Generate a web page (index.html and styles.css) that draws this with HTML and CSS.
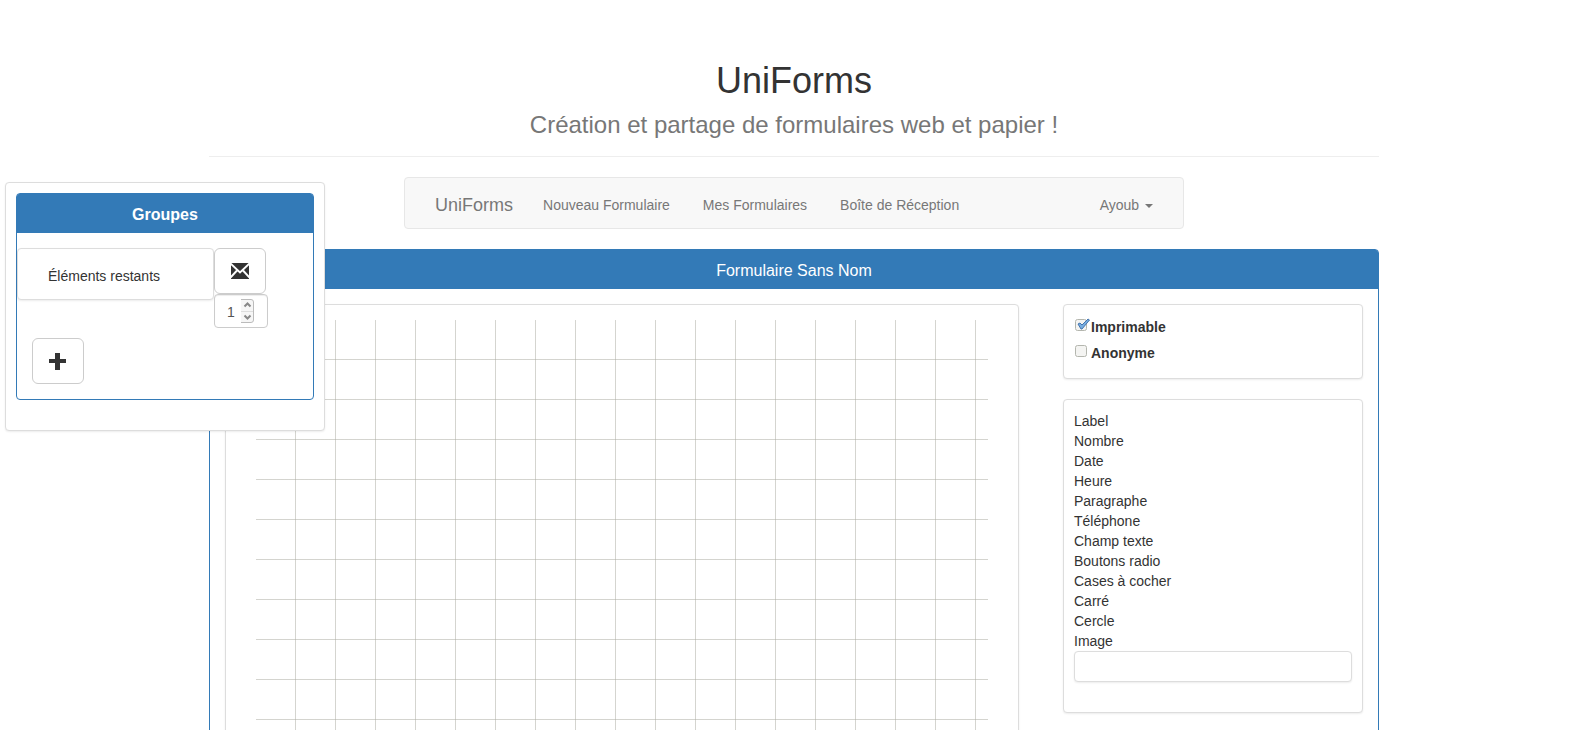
FILE: index.html
```html
<!DOCTYPE html>
<html lang="fr">
<head>
<meta charset="utf-8">
<title>UniForms</title>
<link rel="stylesheet" href="styles.css">
</head>
<body>
<div class="container">
  <header class="page-header">
    <h1>UniForms</h1>
    <p class="tagline">Création et partage de formulaires web et papier !</p>
  </header>

  <nav class="navbar">
    <a class="brand" href="#">UniForms</a>
    <div class="nav-links">
      <a class="nav-link" href="#">Nouveau Formulaire</a>
      <a class="nav-link" href="#">Mes Formulaires</a>
      <a class="nav-link" href="#">Boîte de Réception</a>
    </div>
    <button class="nav-link user-menu" type="button">Ayoub <span class="caret"></span></button>
  </nav>

  <main class="panel">
    <h2 class="panel-heading">Formulaire Sans Nom</h2>
    <div class="editor">
      <section class="thumbnail sheet"><div class="grid"></div></section>
      <aside class="sidebar">
        <div class="thumbnail options">
          <label class="check"><input type="checkbox" checked>Imprimable</label>
          <label class="check"><input type="checkbox">Anonyme</label>
        </div>
        <div class="thumbnail toolbox">
          <ul class="tools">
            <li>Label</li>
            <li>Nombre</li>
            <li>Date</li>
            <li>Heure</li>
            <li>Paragraphe</li>
            <li>Téléphone</li>
            <li>Champ texte</li>
            <li>Boutons radio</li>
            <li>Cases à cocher</li>
            <li>Carré</li>
            <li>Cercle</li>
            <li>Image</li>
          </ul>
          <input class="thumbnail image-field" type="text" aria-label="Image">
        </div>
      </aside>
    </div>
  </main>
</div>

<aside class="thumbnail groups">
  <div class="panel">
    <h2 class="panel-heading strong">Groupes</h2>
    <div class="group-row">
      <div class="thumbnail group-name">Éléments restants</div>
      <div class="group-actions">
        <button class="btn" type="button" aria-label="Envoyer">
          <svg width="18" height="18" viewBox="0 0 18 18" fill="none"><path d="M0 1h18v16H0z" fill="#333"/><path d="M-.5 1.500L9 10.500l9.500-9M-.5 15.500L6 8.500M18.500 15.500L12 8.500" stroke="#fff" stroke-width="1.900"/></svg>
        </button>
        <span class="number">
          <input type="number" value="1" aria-label="Nombre de groupes">
          <svg width="13" height="24" viewBox="0 0 13 24" fill="none"><path d="M0 .5h10a2.500 2.500 0 0 1 2.500 2.500v18a2.500 2.500 0 0 1-2.500 2.500H0" fill="#f6f6f6" stroke="#bbb"/><path d="M0 12.500h12" stroke="#ddd"/><path d="M3.500 7.500l3-3 3 3M3.500 16.500l3 3 3-3" stroke="#888" stroke-width="2"/></svg>
        </span>
      </div>
    </div>
    <button class="btn add" type="button" aria-label="Ajouter un groupe">
      <svg width="18" height="18" viewBox="0 0 18 18" fill="currentColor"><path d="M6 1h5v6h6v4h-6v7H6v-7H0V7h6z"/></svg>
    </button>
  </div>
</aside>
</body>
</html>
```
FILE: styles.css
```css
* { box-sizing: border-box; }

body {
  margin: 0;
  padding-left: 7px;
  background: #fff;
  color: #333;
  font: 14px/20px "Liberation Sans", Arial, sans-serif;
}

h1, h2, p, ul { margin: 0; padding: 0; font-weight: 400; }

button, input { font: inherit; color: inherit; }

.container { max-width: 1170px; margin: 0 auto; }

.page-header {
  padding: 61px 0 18px;
  margin-bottom: 20px;
  border-bottom: 1px solid #eee;
  text-align: center;
}

.page-header h1 { font-size: 36px; line-height: 40px; }

.tagline {
  margin-top: 11px;
  color: #777;
  font-size: 24px;
  line-height: 26px;
}

.navbar {
  display: flex;
  align-items: center;
  width: 66.667%;
  min-height: 52px;
  margin: 0 auto 20px;
  padding: 0 15px;
  background: #f8f8f8;
  border: 1px solid #e7e7e7;
  border-radius: 4px;
}

.nav-links { display: flex; gap: 3px; }

.brand, .nav-link {
  padding: 17px 15px 13px;
  border: 0;
  background: none;
  color: #777;
  text-decoration: none;
}

.brand { font-size: 18px; }

.user-menu { margin-left: auto; }

.caret {
  display: inline-block;
  margin-left: 2px;
  vertical-align: middle;
  border-top: 4px solid;
  border-left: 4px solid transparent;
  border-right: 4px solid transparent;
}

.panel {
  border: 1px solid #337ab7;
  border-radius: 4px;
  background: #fff;
}

.panel-heading {
  padding: 11px 15px 9px;
  background: #337ab7;
  border-radius: 2px 2px 0 0;
  color: #fff;
  font-size: 16px;
  line-height: 19px;
  text-align: center;
}

.strong { font-weight: 700; }

.thumbnail {
  background: #fff;
  border: 1px solid #ddd;
  border-radius: 4px;
  box-shadow: 0 1px 2px rgba(0, 0, 0, 0.075);
}

.editor {
  display: grid;
  grid-template-columns: 1fr 300px;
  gap: 44px;
  align-items: start;
  padding: 15px;
}

.sheet { padding: 15px 30px; }

.grid {
  height: 1000px;
  background:
    repeating-linear-gradient(to right, transparent 0 39px, rgba(170, 170, 160, 0.5) 39px 40px),
    repeating-linear-gradient(to bottom, transparent 0 39px, rgba(170, 170, 160, 0.5) 39px 40px);
}

.sidebar { display: grid; gap: 20px; }

.options {
  display: grid;
  gap: 6px;
  padding: 12px 10px 15px;
}

.check { display: flex; font-weight: 700; }

.check input {
  appearance: none;
  width: 17px;
  height: 14px;
  margin: 1px 0 0;
  background: url("data:image/svg+xml,%3Csvg xmlns='http://www.w3.org/2000/svg' width='17' height='14'%3E%3Crect x='1.500' y='1.500' width='11' height='11' rx='2' fill='%23f4f4f2' stroke='%23b4b6ae'/%3E%3C/svg%3E") no-repeat;
}

.check input:checked {
  background-image: url("data:image/svg+xml,%3Csvg xmlns='http://www.w3.org/2000/svg' width='17' height='14'%3E%3Crect x='1.500' y='1.500' width='11' height='11' rx='2' fill='%23f4f4f2' stroke='%23b4b6ae'/%3E%3Cpath d='M4 6l2-1 2 2 6-6 1.500 1L8 11H7z' fill='%2378aee0' stroke='%234474ae'/%3E%3C/svg%3E");
}

.toolbox { padding: 11px 10px 30px; }

.tools { list-style: none; }

.image-field { display: block; width: 100%; height: 31px; padding: 4px 8px; }

.groups {
  position: absolute;
  top: 182px;
  left: 5px;
  width: 320px;
  padding: 10px 10px 30px;
}

.group-row { display: flex; align-items: flex-start; padding-top: 15px; }

.group-name { width: 197px; padding: 17px 30px 13px; }

.group-actions { display: grid; justify-items: start; }

.btn {
  display: flex;
  align-items: center;
  justify-content: center;
  width: 52px;
  height: 46px;
  padding: 0;
  background: #fff;
  border: 1px solid #ccc;
  border-radius: 6px;
}

.add { margin: 10px 15px 15px; }

.number {
  display: flex;
  align-items: center;
  width: 54px;
  height: 34px;
  padding: 0 12px;
  border: 1px solid #ccc;
  border-radius: 4px;
  box-shadow: inset 0 1px 1px rgba(0, 0, 0, 0.075);
  color: #555;
}

.number input {
  appearance: textfield;
  width: 14px;
  flex: none;
  padding: 2px 0 0;
  border: 0;
  background: none;
}

.number input::-webkit-inner-spin-button { appearance: none; margin: 0; }

.number svg { flex: none; }
```
